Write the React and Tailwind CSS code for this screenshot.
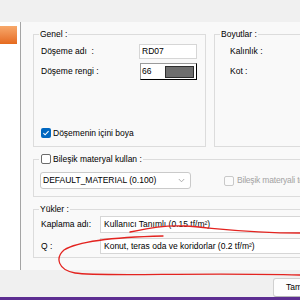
import React from "react";

function Check({ checked, disabled }) {
  if (checked) {
    return (
      <span className="flex h-[10px] w-[10px] shrink-0 items-center justify-center rounded-[2px] bg-[#0067c0]">
        <svg width="8" height="8" viewBox="0 0 8 8">
          <path d="M1.4 4.1 L3.1 5.8 L6.6 2.1" fill="none" stroke="white" strokeWidth="1.1" />
        </svg>
      </span>
    );
  }
  return (
    <span
      className={
        disabled
          ? "h-[10px] w-[10px] shrink-0 rounded-[2px] border border-[#c9c9c9] bg-[#fbfbfb]"
          : "h-[10px] w-[10px] shrink-0 rounded-[2px] border border-[#6b6b6b] bg-white"
      }
    />
  );
}

export default function App() {
  return (
    <div className="relative flex h-[300px] w-[300px] flex-col overflow-hidden bg-[#f0f0f0] font-['Liberation_Sans',Arial,sans-serif] text-[8.5px] text-black">
      <div className="h-[22px] shrink-0" />

      <div className="flex h-[248px] shrink-0">
        {/* left list */}
        <div className="w-[21px] shrink-0 border-r border-[#a5a5a5] bg-white pt-[4px]">
          <div className="h-[18px] w-[17px] bg-gradient-to-b from-[#f7a86a] to-[#e56a1c]" />
        </div>

        {/* form area */}
        <div className="flex-1 overflow-hidden bg-[#f9f9f9] pl-[12px] pt-[6px]">
          <div className="w-[320px]">
            <div className="flex gap-[8px]">
              <fieldset className="h-[119px] w-[173px] shrink-0 border border-[#dcdcdc]">
                <legend className="ml-[5px] px-[1px] leading-[12px]">Genel :</legend>
                <div className="pl-[7px]">
                  <div className="mt-[4px] flex h-[15px] items-center">
                    <span className="w-[98px]">Döşeme adı&nbsp;&nbsp;:</span>
                    <div className="flex h-[15px] w-[58px] items-center border border-[#d6d6d6] bg-white pl-[2px]">RD07</div>
                  </div>
                  <div className="mt-[4px] flex h-[17px] items-center">
                    <span className="w-[99px]">Döşeme rengi :</span>
                    <div className="flex h-[17px] w-[57px] items-center border border-b-black border-l-[#9a9a9a] border-r-black border-t-[#9a9a9a] bg-white">
                      <span className="w-[24px] pl-[1px]">66</span>
                      <div className="h-[12px] w-[29px] border border-[#2e2e2e] bg-[#6e6e6e]" />
                    </div>
                  </div>
                  <div className="mt-[48px] flex h-[10px] items-center gap-[2px]">
                    <Check checked />
                    <span>Döşemenin içini boya</span>
                  </div>
                </div>
              </fieldset>

              <fieldset className="h-[119px] w-[120px] shrink-0 border border-[#dcdcdc]">
                <legend className="ml-[5px] px-[1px] leading-[12px]">Boyutlar :</legend>
                <div className="pl-[15px]">
                  <div className="mt-[4px] flex h-[15px] items-center">Kalınlık :</div>
                  <div className="mt-[4px] flex h-[17px] items-center">Kot :</div>
                </div>
              </fieldset>
            </div>

            <fieldset className="mt-[6px] h-[44px] border border-[#dcdcdc]">
              <legend className="ml-[5px] flex items-center gap-[2px] pl-[2px] pr-[1px] leading-[12px]">
                <Check />
                <span>Bileşik materyal kullan :</span>
              </legend>
              <div className="mt-[7px] flex items-center pl-[6px]">
                <div className="flex h-[17px] w-[151px] items-center justify-between rounded-[3px] border border-[#cacaca] bg-white pl-[2px] pr-[5px]">
                  <span>DEFAULT_MATERIAL (0.100)</span>
                  <svg width="7" height="5" viewBox="0 0 7 5">
                    <path d="M0.8 1 L3.5 3.8 L6.2 1" fill="none" stroke="#9a9a9a" strokeWidth="0.8" />
                  </svg>
                </div>
                <div className="ml-[33px] flex items-center gap-[3px] text-[#a3a3a3]">
                  <Check disabled />
                  <span className="whitespace-nowrap tracking-[-0.2px]">Bileşik materyali tekrarla</span>
                </div>
              </div>
            </fieldset>

            <fieldset className="mt-[6px] h-[55px] border border-[#dcdcdc]">
              <legend className="ml-[5px] px-[1px] leading-[12px]">Yükler :</legend>
              <div className="pl-[7px]">
                <div className="mt-[1px] flex h-[17px] items-center">
                  <span className="w-[59px]">Kaplama adı:</span>
                  <div className="flex h-[17px] w-[220px] items-center border border-[#d6d6d6] bg-white pl-[3px]">
                    Kullanıcı Tanımlı (0.15 tf/m²)
                  </div>
                </div>
                <div className="mt-[5px] flex h-[16px] items-center">
                  <span className="w-[59px]">Q :</span>
                  <div className="flex h-[16px] w-[220px] items-center border border-[#d6d6d6] bg-white pl-[3px]">
                    Konut, teras oda ve koridorlar (0.2 tf/m²)
                  </div>
                </div>
              </div>
            </fieldset>
          </div>
        </div>
      </div>

      <div className="flex h-[27px] shrink-0 pl-[273px] pt-[8px]">
        <div className="flex h-[19px] w-[54px] shrink-0 items-center justify-center rounded-[3px] border border-[#d0d0d0] border-b-[#b8b8b8] bg-[#fdfdfd]">
          Tamam
        </div>
      </div>
      <div className="h-[3px] shrink-0 bg-[#5c2d91]" />

      {/* red hand-drawn annotation */}
      <svg className="pointer-events-none absolute left-0 top-0" width="300" height="300" viewBox="0 0 300 300">
        <path
          d="M130 232 C 150 228, 165 225, 185 226 C 215 228, 245 233, 300 233"
          fill="none"
          stroke="#e3231f"
          strokeWidth="1.3"
          strokeLinecap="round"
        />
        <path
          d="M163 236 C 120 237, 80 240, 64 250 C 55 258, 58 270, 75 273 C 100 277, 200 272, 300 275"
          fill="none"
          stroke="#e3231f"
          strokeWidth="1.3"
          strokeLinecap="round"
        />
      </svg>
    </div>
  );
}
